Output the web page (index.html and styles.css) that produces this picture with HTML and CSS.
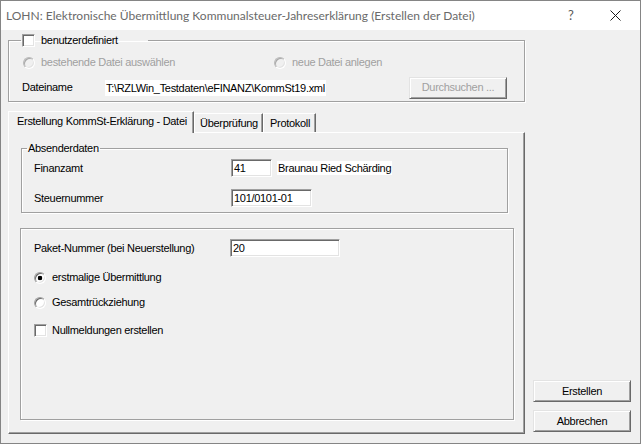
FILE: index.html
```html
<!DOCTYPE html>
<html lang="de">
<head>
<meta charset="utf-8">
<title>LOHN: Elektronische Übermittlung</title>
<link rel="stylesheet" href="styles.css">
</head>
<body>
<div class="window">
  <div class="titlebar">
    <span class="title">LOHN: Elektronische Übermittlung Kommunalsteuer-Jahreserklärung (Erstellen der Datei)</span>
    <span class="help">?</span>
    <span class="close"><svg width="11" height="11" viewBox="0 0 11 11"><path d="M0.5 0.5 L10.5 10.5 M10.5 0.5 L0.5 10.5" stroke="#1a1a1a" stroke-width="1" fill="none"/></svg></span>
  </div>
  <div class="client">
    <div class="main">
      <fieldset class="group top-group">
        <legend class="cb-legend"><span class="check"></span><span>benutzerdefiniert</span></legend>
        <div class="row radios">
          <label class="opt disabled first"><span class="radio"></span><span>bestehende Datei auswählen</span></label>
          <label class="opt disabled"><span class="radio"></span><span>neue Datei anlegen</span></label>
        </div>
        <div class="row file">
          <span class="lbl-file">Dateiname</span>
          <span class="hl path">T:\RZLWin_Testdaten\eFINANZ\KommSt19.xml</span>
          <span class="btn disabled browse">Durchsuchen ...</span>
        </div>
      </fieldset>

      <div class="tabs">
        <div class="tab active">Erstellung KommSt-Erklärung - Datei</div>
        <div class="tab t2">Überprüfung</div>
        <div class="tab t3">Protokoll</div>
      </div>

      <div class="panel">
        <fieldset class="group sender">
          <legend class="txt-legend">Absenderdaten</legend>
          <div class="row field r-fa">
            <span class="lbl">Finanzamt</span>
            <span class="edit w41">41</span>
            <span class="hl fa-name">Braunau Ried Schärding</span>
          </div>
          <div class="row field r-st">
            <span class="lbl">Steuernummer</span>
            <span class="edit w81">101/0101-01</span>
          </div>
        </fieldset>

        <div class="group options">
          <div class="row field r-pk">
            <span class="lbl lbl-pk">Paket-Nummer (bei Neuerstellung)</span>
            <span class="edit w110">20</span>
          </div>
          <label class="row opt r-o1"><span class="radio checked"></span><span>erstmalige Übermittlung</span></label>
          <label class="row opt r-o2"><span class="radio"></span><span>Gesamtrückziehung</span></label>
          <label class="row opt cb r-o3"><span class="check"></span><span>Nullmeldungen erstellen</span></label>
        </div>
      </div>
    </div>

    <div class="side">
      <span class="btn">Erstellen</span>
      <span class="btn">Abbrechen</span>
    </div>
  </div>
</div>
</body>
</html>
```

FILE: styles.css
```css
* { box-sizing: border-box; }
html, body { margin: 0; padding: 0; }
body {
  width: 641px;
  height: 444px;
  overflow: hidden;
  background: #f0f0f0;
  font-family: "Liberation Sans", Arial, sans-serif;
  font-size: 11px;
  letter-spacing: -0.3px;
  line-height: 13px;
  color: #000;
}

.window {
  width: 641px;
  height: 444px;
  border: 1px solid #858585;
  display: flex;
  flex-direction: column;
  background: #f0f0f0;
}

/* title bar */
.titlebar {
  height: 29px;
  flex: none;
  background: #fff;
  display: flex;
  align-items: center;
}
.title {
  flex: 1;
  padding-left: 5px;
  font-family: "Lato", "Noto Sans", sans-serif;
  font-size: 12px;
  letter-spacing: 0;
  color: #6a6a6a;
  white-space: nowrap;
}
.help {
  width: 20px;
  margin-right: 11px;
  text-align: center;
  font-family: "Lato", sans-serif;
  font-size: 13px;
  letter-spacing: 0;
  color: #5a5a5a;
}
.close {
  width: 46px;
  margin-right: 2px;
  display: flex;
  justify-content: center;
  align-items: center;
}

/* client */
.client {
  flex: 1;
  display: flex;
  padding-left: 7px;
}
.main {
  width: 517px;
  display: flex;
  flex-direction: column;
}
.side {
  margin-left: 8px;
  padding-bottom: 11px;
  display: flex;
  flex-direction: column;
  justify-content: flex-end;
  gap: 8px;
}

/* etched group */
.group {
  margin: 0;
  padding: 0;
  min-width: 0;
  border: 1px solid #a0a0a0;
  box-shadow: inset 1px 1px 0 #fff, 1px 1px 0 #fff;
}
.group > legend {
  padding: 0 1px;
  line-height: 13px;
  height: 13px;
}

.row { display: flex; align-items: center; }

/* top group */
.top-group {
  margin-top: 4px;
  width: 517px;
  padding-bottom: 2px;
}
.cb-legend {
  margin-left: 12px;
  width: 127px;
  display: flex;
  align-items: center;
  gap: 6px;
}
.radios {
  margin-top: 9px;
  height: 13px;
  padding-left: 14px;
}
.opt { display: flex; align-items: center; gap: 6px; }
.opt.first { width: 251px; }
.disabled { color: #a0a0a0; }

.file {
  margin-top: 7px;
  height: 23px;
  padding-left: 13px;
}
.lbl-file { width: 83px; }
.hl {
  background: #fff;
  padding: 0 1px;
  line-height: 16px;
}
.browse {
  margin-left: auto;
  margin-right: 17px;
  height: 23px;
}

/* controls */
.check {
  flex: none;
  width: 13px;
  height: 13px;
  background: #fff;
  border: 1px solid;
  border-color: #a0a0a0 #fff #fff #a0a0a0;
  box-shadow: inset 1px 1px 0 #696969, inset -1px -1px 0 #e3e3e3;
}
.radio {
  flex: none;
  width: 12px;
  height: 12px;
  border-radius: 50%;
  background: #fff;
  border: 1px solid;
  border-color: #a0a0a0 #fff #fff #a0a0a0;
  box-shadow: inset 1px 1px 0 #696969, inset -1px -1px 0 #e3e3e3;
}
.radio.checked {
  background: radial-gradient(circle at center, #000 0 2px, #fff 2.6px);
}
.disabled .radio {
  background: #f0f0f0;
  border-color: #b9b9b9 #fff #fff #b9b9b9;
  box-shadow: inset 1px 1px 0 #a8a8a8, inset -1px -1px 0 #e3e3e3;
}

.btn {
  width: 98px;
  height: 22px;
  display: flex;
  align-items: center;
  justify-content: center;
  background: #f0f0f0;
  border: 1px solid;
  border-color: #e3e3e3 #696969 #696969 #e3e3e3;
  box-shadow: inset 1px 1px 0 #fff, inset -1px -1px 0 #a0a0a0;
}

.edit {
  height: 18px;
  background: #fff;
  border: 1px solid;
  border-color: #a0a0a0 #fff #fff #a0a0a0;
  box-shadow: inset 1px 1px 0 #696969, inset -1px -1px 0 #e3e3e3;
  padding-left: 2px;
  line-height: 16px;
}
.w41 { width: 41px; }
.w81 { width: 81px; }
.w110 { width: 110px; }

/* tabs */
.tabs {
  margin-top: 9px;
  height: 21px;
  display: flex;
  align-items: flex-end;
}
.tab {
  height: 19px;
  padding: 3px 0 0 5px;
  border-left: 1px solid #fff;
  border-top: 1px solid #fff;
  border-right: 1px solid #696969;
  box-shadow: inset -1px 0 0 #a0a0a0;
  white-space: nowrap;
}
.tab.active {
  position: relative;
  z-index: 1;
  width: 186px;
  height: 22px;
  margin-bottom: -1px;
  padding-left: 8px;
  background: #f0f0f0;
}
.t2 { width: 69px; }
.t3 { width: 53px; padding-left: 6px; }

.panel {
  width: 517px;
  height: 302px;
  border: 1px solid;
  border-color: #fff #696969 #696969 #fff;
  box-shadow: inset -1px -1px 0 #a0a0a0;
}

.sender {
  margin: 9px 0 0 12px;
  width: 487px;
  padding-bottom: 5px;
}
.txt-legend { margin-left: 5px; }
.field { height: 18px; padding-left: 12px; }
.lbl { width: 197px; }
.r-fa { margin-top: 4px; }
.r-st { margin-top: 12px; }
.fa-name { margin-left: 5px; line-height: 14px; }

.options {
  margin: 15px 0 0 11px;
  width: 494px;
  height: 192px;
  padding-left: 13px;
}
.options .field { padding-left: 0; }
.lbl-pk { width: 196px; }
.r-pk { margin-top: 10px; }
.r-o1 { margin-top: 14px; height: 13px; }
.r-o2 { margin-top: 12px; height: 13px; }
.r-o3 { margin-top: 15px; height: 13px; gap: 5px; }
```
